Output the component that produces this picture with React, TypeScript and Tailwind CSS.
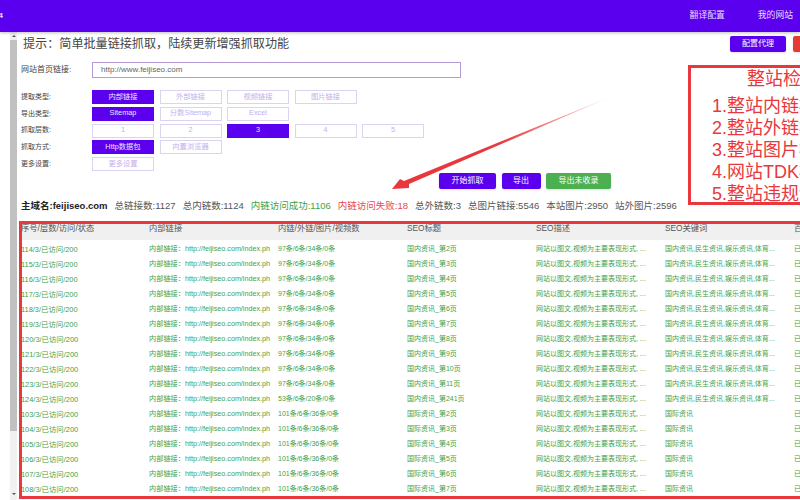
const rows = [
  ...[114, 115, 116, 117, 118, 119, 120, 121, 122, 123, 124].map((n, i) => ({
    id: n,
    counts: n === 124 ? '53条/6条/20条/0条' : '97条/6条/34条/0条',
    title: `国内资讯_第${n === 124 ? 241 : i + 2}页`,
    keywords: '国内资讯,民生资讯,娱乐资讯,体育...',
  })),
  ...[103, 104, 105, 106, 107, 108].map((n, i) => ({
    id: n,
    counts: '101条/6条/36条/0条',
    title: `国际资讯_第${i + 2}页`,
    keywords: '国际资讯',
  })),
];

const headers = ['序号/层数/访问/状态', '内部链接', '内链/外链/图片/视频数', 'SEO标题', 'SEO描述', 'SEO关键词', '百度收录'];

const options = [
  { label: '提取类型:', items: ['内部链接', '外部链接', '视频链接', '图片链接'], active: 0 },
  { label: '导出类型:', items: ['Sitemap', '分数Sitemap', 'Excel'], active: 0 },
  { label: '抓取层数:', items: ['1', '2', '3', '4', '5'], active: 2 },
  { label: '抓取方式:', items: ['Http数据包', '内置浏览器'], active: 0 },
  { label: '更多设置:', items: ['更多设置'], active: -1 },
];

const notes = ['1.整站内链检测', '2.整站外链检测', '3.整站图片检测', '4.网站TDK检测', '5.整站违规词检测'];

function ActionButton({ children, className }: { children: string; className: string }) {
  return (
    <button className={`flex h-4 shrink-0 items-center justify-center rounded-[2px] text-[8px] text-white shadow-sm ${className}`}>
      {children}
    </button>
  );
}

export default function App() {
  return (
    <div className="relative flex h-[500px] w-[800px] flex-col overflow-hidden bg-white font-['Liberation_Sans','Noto_Sans_CJK_SC',sans-serif] text-[#333]">
      <header className="z-10 flex h-[32px] shrink-0 items-center justify-between bg-[#5a00ee] text-[8.8px] text-[#e6dcff] shadow-[0_1px_3px_rgba(0,0,0,0.25)]">
        <span className="-ml-[6px] text-[8px] font-bold">04</span>
        <nav className="flex gap-[33px] pr-[7px]">
          <span>翻译配置</span>
          <span>我的网站</span>
        </nav>
      </header>

      <div className="flex min-h-0 flex-1">
        <div className="ml-[10px] flex w-[7px] shrink-0 flex-col items-center bg-[#f1f1f1]">
          <div className="mt-[3px] h-0 w-0 border-x-[2px] border-b-[2px] border-x-transparent border-b-[#555]" />
          <div className="mt-[3px] h-[391px] w-full bg-[#c1c1c1]" />
          <div className="mt-auto mb-[5px] h-0 w-0 border-x-[2px] border-t-[2px] border-x-transparent border-t-[#555]" />
        </div>

        <main className="flex min-w-0 flex-1 flex-col pl-[2px]">
          <div className="mt-[4px] -mr-[49px] flex h-4 items-center pl-[4px]">
            <h1 className="text-[12.1px] text-[#444]">提示：简单批量链接抓取，陆续更新增强抓取功能</h1>
            <ActionButton className="ml-auto w-[56px] bg-[#5a00ee]">配置代理</ActionButton>
            <ActionButton className="ml-[7px] w-[56px] bg-[#e53935]">清除缓存</ActionButton>
          </div>

          <div className="mt-[10px] flex h-4 items-center pl-[2px]">
            <label className="w-[71px] text-[8px] text-[#444]">网站首页链接:</label>
            <div className="flex h-4 w-[369px] items-center border border-[#b79ad8] pl-2 text-[8px] text-[#666]">
              http://www.feijiseo.com
            </div>
          </div>

          <div className="mt-[12px] flex flex-col gap-[2.75px] pl-[2px]">
            {options.map((row) => (
              <div key={row.label} className="flex h-[14px] items-center">
                <span className="w-[71px] text-[7px] text-[#444]">{row.label}</span>
                <div className="flex gap-[5.5px]">
                  {row.items.map((item, i) => (
                    <span
                      key={item}
                      className={
                        i === row.active
                          ? 'flex h-[14px] w-[62px] items-center justify-center bg-[#5a00ee] text-[7.3px] text-[#eee5ff]'
                          : 'flex h-[14px] w-[62px] items-center justify-center border border-[#dcd3f0] text-[7.3px] text-[#c3b0ec]'
                      }
                    >
                      {item}
                    </span>
                  ))}
                </div>
              </div>
            ))}
          </div>

          <div className="mt-[2px] ml-[420px] flex gap-[5.5px]">
            <ActionButton className="w-[57px] bg-[#5a00ee]">开始抓取</ActionButton>
            <ActionButton className="w-[39px] bg-[#5a00ee]">导出</ActionButton>
            <ActionButton className="w-[65px] bg-[#4caf50]">导出未收录</ActionButton>
          </div>

          <div className="mt-[12px] flex h-[11px] items-center gap-[7px] whitespace-nowrap pl-[2px] text-[9.5px] text-[#555]">
            <span className="font-bold text-[#222]">主域名:feijiseo.com</span>
            <span>总链接数:1127</span>
            <span>总内链数:1124</span>
            <span className="text-[#3f9f4a]">内链访问成功:1106</span>
            <span className="text-[#e8484a]">内链访问失败:18</span>
            <span>总外链数:3</span>
            <span>总图片链接:5546</span>
            <span>本站图片:2950</span>
            <span>站外图片:2596</span>
          </div>

          <section className="mt-[9px] mb-[1px] min-h-0 flex-1 overflow-hidden border-[3px] border-r-0 border-[#e8383d] text-[7px]">
            <div className="grid h-[16px] grid-cols-[127px_129px_129px_129px_129px_129px_129px] items-start bg-[#f0f0f0] text-[8.3px] leading-[8px] text-[#555]">
              {headers.map((h, i) => (
                <span key={h} className={i === 0 ? '-ml-[1px] whitespace-nowrap' : 'whitespace-nowrap'}>
                  {h}
                </span>
              ))}
            </div>
            <div className="flex flex-col pt-[2px] text-[#3f9f4a]">
              {rows.map((r) => (
                <div key={r.id} className="grid h-[15px] shrink-0 grid-cols-[127px_129px_129px_129px_129px_129px_129px] items-center whitespace-nowrap">
                  <span className="-ml-[1px] text-[7.4px]">{r.id}/3/已访问/200</span>
                  <span className="w-[123px] overflow-hidden text-[7.2px]">内部链接：http://feijiseo.com/index.ph</span>
                  <span>{r.counts}</span>
                  <span>{r.title}</span>
                  <span>网站以图文,视频为主要表现形式, ...</span>
                  <span>{r.keywords}</span>
                  <span>已收录</span>
                </div>
              ))}
            </div>
          </section>
        </main>
      </div>

      <aside className="absolute top-[65px] left-[688px] h-[140px] w-[130px] border-[3px] border-[#e8383d] bg-white text-[18px] leading-[22px] whitespace-nowrap text-[#e8383d]">
        <p className="pl-[56px]">整站检测功能</p>
        <ul className="mt-[5px] pl-[21px]">
          {notes.map((n) => (
            <li key={n}>{n}</li>
          ))}
        </ul>
      </aside>

      <svg className="absolute top-[95px] left-[390px]" width="225" height="100" viewBox="0 0 225 100">
        <defs>
          <linearGradient id="tail" x1="1" y1="0" x2="0" y2="1">
            <stop offset="0" stopColor="#e8383d" stopOpacity="0.1" />
            <stop offset="0.5" stopColor="#e8383d" />
          </linearGradient>
        </defs>
        <path d="M220 2 L19 89 L19 93 L2 94 L10 84 L14 86 Z" fill="url(#tail)" />
      </svg>
    </div>
  );
}
